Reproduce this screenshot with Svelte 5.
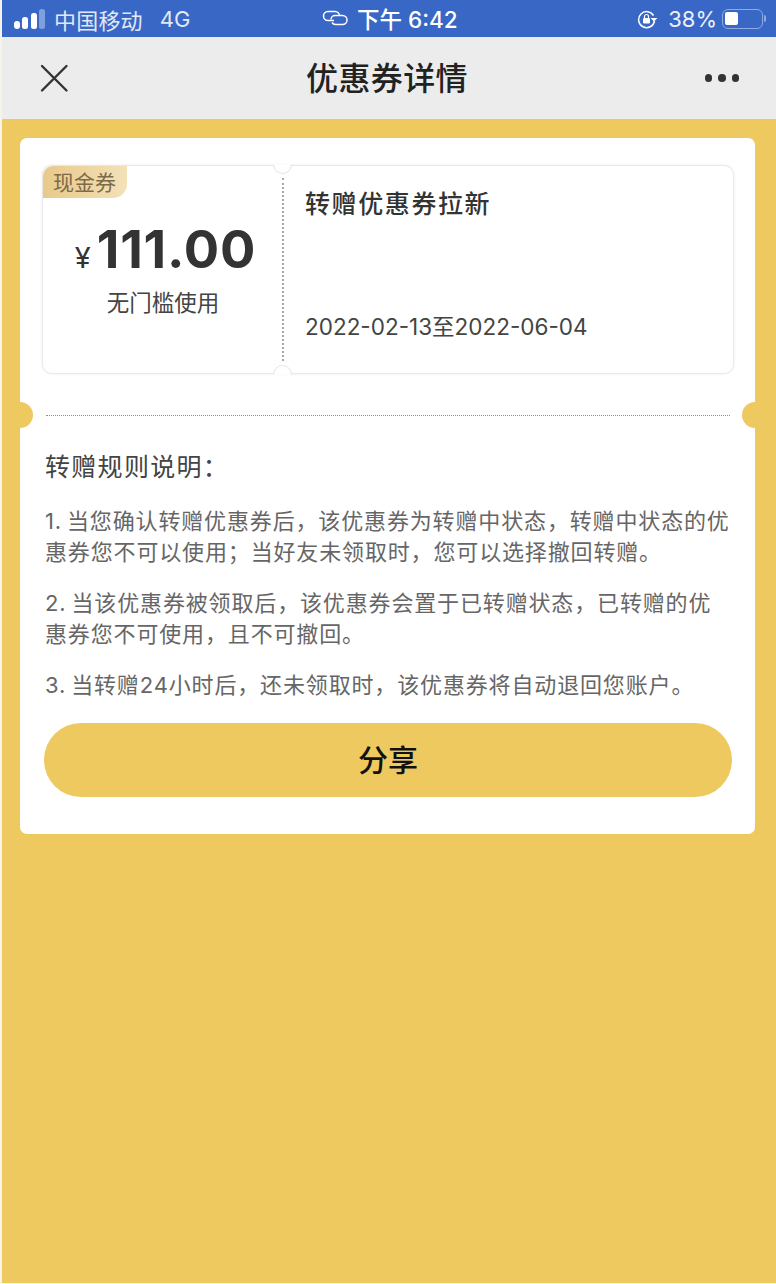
<script>
  const rules = [
    '1. 当您确认转赠优惠券后，该优惠券为转赠中状态，转赠中状态的优惠券您不可以使用；当好友未领取时，您可以选择撤回转赠。',
    '2. 当该优惠券被领取后，该优惠券会置于已转赠状态，已转赠的优惠券您不可使用，且不可撤回。',
    '3. 当转赠24小时后，还未领取时，该优惠券将自动退回您账户。'
  ];
</script>

<div class="page">
  <header class="status">
    <div class="status-left">
      <svg class="signal" width="32" height="20" viewBox="0 0 32 20">
        <rect x="0" y="12" width="6" height="8" rx="3" fill="#fff"/>
        <rect x="8" y="8" width="6" height="12" rx="2.500" fill="#fff"/>
        <rect x="17" y="4" width="6" height="16" rx="2.500" fill="#fff"/>
        <rect x="25" y="0" width="6" height="20" rx="2.500" fill="#7f9fdf"/>
      </svg>
      <span class="carrier">中国移动</span>
      <span class="net">4G</span>
    </div>
    <div class="status-center">
      <svg width="26" height="16" viewBox="0 0 26 16" fill="none" stroke="#fff" stroke-width="1.500">
        <path d="M12 10.500H6a4.500 4.500 0 0 1 0-9h7a4.500 4.500 0 0 1 4.500 4.500"/>
        <path d="M9 9.500a4 4 0 0 1 4-4h7.500a4.500 4.500 0 0 1 0 9H13.500a4.500 4.500 0 0 1-3.500-2"/>
      </svg>
      <span class="time">下午 6:42</span>
    </div>
    <div class="status-right">
      <svg width="21" height="20" viewBox="0 0 21 20" fill="none">
        <path d="M16.500 6.500A8 8 0 1 0 17.500 12" stroke="#fff" stroke-width="1.500"/>
        <path d="M20.500 9l-3.500 3.500L13.500 9z" fill="#fff"/>
        <rect x="6" y="9" width="7" height="5.500" rx="1" fill="#fff"/>
        <path d="M7.500 9V7.500a2 2 0 0 1 4 0V9" stroke="#fff" stroke-width="1.200"/>
      </svg>
      <span class="pct">38%</span>
      <div class="battery"><div class="level"></div></div>
      <div class="nub"></div>
    </div>
  </header>

  <nav class="nav">
    <svg class="close" width="30" height="30" viewBox="0 0 30 30" stroke="#333" stroke-width="2.400" stroke-linecap="round">
      <path d="M3 3L27.500 27.500M27.500 3L3 27.500"/>
    </svg>
    <h1>优惠券详情</h1>
    <div class="dots"><i></i><i></i><i></i></div>
  </nav>

  <main class="body">
    <section class="card">
      <div class="coupon">
        <div class="left">
          <div class="tag">现金券</div>
          <div class="amount"><span class="yen">¥</span><span class="num">111.00</span></div>
          <div class="cond">无门槛使用</div>
        </div>
        <div class="cut"></div>
        <div class="right">
          <div class="name">转赠优惠券拉新</div>
          <div class="date">2022-02-13至2022-06-04</div>
        </div>
        <span class="notch top"></span>
        <span class="notch bottom"></span>
      </div>

      <div class="divider">
        <span class="hole l"></span>
        <span class="hole r"></span>
      </div>

      <h2>转赠规则说明：</h2>
      {#each rules as r}
        <p>{r}</p>
      {/each}

      <button class="share">分享</button>
    </section>
  </main>
</div>

<style>
  :global(body) {
    margin: 0;
    background: #f6f3ea;
  }
  .page {
    margin-left: 2px;
    width: 774px;
    height: 1283px;
    display: flex;
    flex-direction: column;
    font-family: "Noto Sans CJK SC", "Noto Sans", sans-serif;
    overflow: hidden;
  }
  .status {
    height: 37px;
    background: #3867c5;
    color: #fff;
    position: relative;
    display: flex;
    align-items: center;
    justify-content: space-between;
    font-family: "Inter", "Noto Sans CJK SC", sans-serif;
    font-size: 20px;
    flex: none;
  }
  .status-left {
    display: flex;
    align-items: center;
    padding-left: 12px;
  }
  .signal { margin-right: 8px; }
  .carrier { font-family: "Noto Sans CJK SC", sans-serif; font-size: 22px; line-height: 36px; opacity: .85; letter-spacing: .2px; }
  .net { margin-left: 17px; font-size: 22px; opacity: .85; }
  .status-center {
    position: absolute;
    left: 320px;
    top: 0;
    height: 36px;
    display: flex;
    align-items: center;
    gap: 9px;
  }
  .time { font-size: 22.500px; font-weight: 500; white-space: nowrap; }
  .status-right {
    display: flex;
    align-items: center;
    padding-right: 10px;
    height: 36px;
  }
  .pct { margin-left: 10px; font-size: 22px; opacity: .9; }
  .battery {
    width: 41px;
    height: 20px;
    box-sizing: border-box;
    border: 1.500px solid #8fa9e2;
    border-radius: 6px;
    padding: 2px;
    margin-left: 5px;
  }
  .level { width: 13px; height: 13px; background: #fff; border-radius: 2px; }
  .nub { width: 2px; height: 7px; background: #8fa9e2; border-radius: 0 2px 2px 0; margin-left: 1px; }

  .nav {
    height: 82px;
    background: #ececec;
    position: relative;
    display: flex;
    align-items: center;
    justify-content: center;
    padding-right: 4px;
    flex: none;
  }
  .close { position: absolute; left: 37px; top: 26px; }
  h1 {
    margin: -4px 0 0;
    font-size: 32px;
    font-weight: 500;
    color: #222;
    line-height: 82px;
    letter-spacing: .4px;
  }
  .dots {
    position: absolute;
    right: 37px;
    top: 37px;
    display: flex;
    gap: 6px;
  }
  .dots i { width: 7.500px; height: 7.500px; background: #333; border-radius: 50%; }

  .body {
    flex: 1;
    background: #eec960;
    padding: 19px 21px 0 18px;
  }
  .card {
    background: #fff;
    border-radius: 7px;
    height: 696px;
    box-sizing: border-box;
    padding: 27px 21px 0 22px;
    position: relative;
  }
  .coupon {
    height: 209px;
    box-sizing: border-box;
    border: 1.500px solid #e9e9e9;
    box-shadow: 0 0 3px rgba(0, 0, 0, .08);
    border-radius: 10px;
    display: flex;
    position: relative;
    background: #fff;
  }
  .left {
    width: 239px;
    flex: none;
    position: relative;
    display: flex;
    flex-direction: column;
    align-items: center;
    padding-top: 48px;
    box-sizing: border-box;
  }
  .cut {
    flex: none;
    width: 0;
    margin: 12px 0 12px;
    border-left: 2px dotted #a9a9a9;
  }
  .tag {
    position: absolute;
    left: 0;
    top: 0;
    width: 84px;
    height: 32px;
    box-sizing: border-box;
    padding-left: 10px;
    background: linear-gradient(90deg, #e8c98a, #f3e1b8);
    border-radius: 10px 0 14px 0;
    color: #7d6a48;
    font-size: 21px;
    line-height: 30px;
  }
  .amount { display: flex; align-items: baseline; padding-left: 6px; }
  .yen { font-family: "Inter", sans-serif; font-size: 29px; color: #333; margin-right: 6px; }
  .num {
    font-family: "Inter", sans-serif;
    font-size: 52.500px;
    font-weight: 700;
    color: #333;
    line-height: 70px;
    letter-spacing: 0.800px;
  }
  .cond { font-size: 22.500px; color: #444; line-height: 32px; margin-top: 1px; padding-left: 1px; }
  .right {
    flex: 1;
    position: relative;
    padding: 18px 0 0 21px;
  }
  .name { font-size: 25px; font-weight: 500; color: #333; line-height: 36px; letter-spacing: 1.600px; }
  .date {
    position: absolute;
    left: 21px;
    top: 145px;
    font-family: "Inter", "Noto Sans CJK SC", sans-serif;
    font-size: 22.500px;
    color: #444;
    line-height: 32px;
    white-space: nowrap;
  }
  .notch {
    position: absolute;
    left: 230px;
    width: 19px;
    height: 19px;
    background: #fff;
    border: 1.500px solid #e4e4e4;
    border-radius: 50%;
    box-sizing: border-box;
  }
  .notch.top { top: -11px; clip-path: inset(9.500px 0 0 0); }
  .notch.bottom { bottom: -11px; clip-path: inset(0 0 9.500px 0); }

  .divider {
    margin: 41px 4px 0 4px;
    border-top: 1.500px dotted #8f8f8f;
    height: 0;
  }
  .hole {
    position: absolute;
    top: 264px;
    width: 26px;
    height: 26px;
    border-radius: 50%;
    background: #eec960;
  }
  .hole.l { left: -13px; }
  .hole.r { right: -13px; }

  h2 {
    margin: 31px 3px 0;
    font-size: 25px;
    font-weight: 400;
    color: #444;
    line-height: 36px;
    letter-spacing: 1.300px;
  }
  p {
    margin: 21px 3px 0;
    font-size: 22px;
    letter-spacing: .85px;
    word-spacing: -2px;
    line-height: 30.500px;
    color: #666;
    font-family: "Inter", "Noto Sans CJK SC", sans-serif;
  }
  h2 + p { margin-top: 23px; }
  .share {
    display: block;
    width: 688px;
    height: 74px;
    margin: 22px 0 0 2px;
    padding: 0 0 3px;
    background: #eec960;
    border: none;
    border-radius: 37px;
    color: #111;
    font-family: inherit;
    font-size: 30px;
    font-weight: 500;
  }
</style>
